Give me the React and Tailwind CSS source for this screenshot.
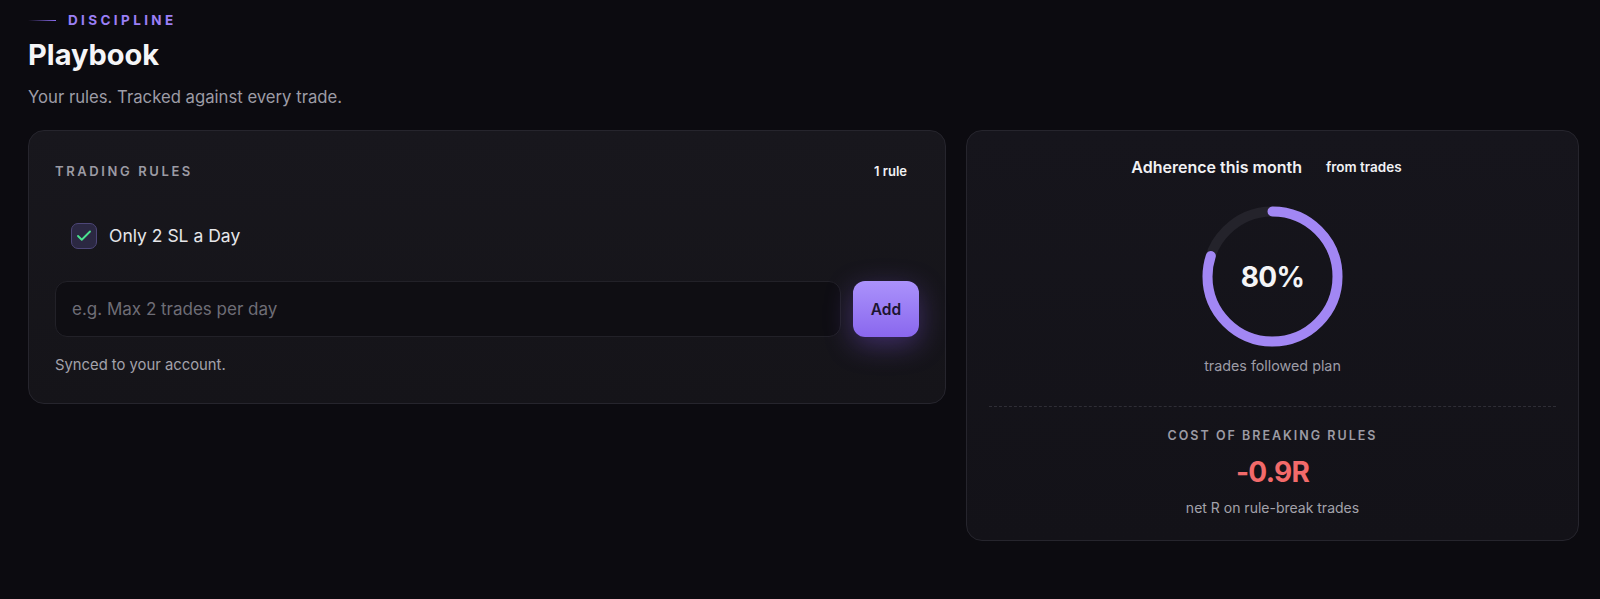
import { Check } from 'lucide-react';

// --- Adherence ring ---
const Ring = ({ value }) => {
  const r = 65;
  const c = 2 * Math.PI * r;
  return (
    <div className="relative w-[141px] h-[141px]">
      <svg width="141" height="141" viewBox="0 0 141 141" className="-rotate-90">
        <circle cx="70.5" cy="70.5" r={r} fill="none" stroke="#24232b" strokeWidth="10" />
        <circle
          cx="70.5" cy="70.5" r={r} fill="none" stroke="#a287f4" strokeWidth="10"
          strokeLinecap="round" strokeDasharray={`${c * value} ${c}`}
        />
      </svg>
      <div className="absolute inset-0 flex items-center justify-center text-[28px] font-bold text-[#f4f4f6] tracking-tight">
        {Math.round(value * 100)}%
      </div>
    </div>
  );
};

export default function App() {
  return (
    <div className="min-h-[599px] bg-[#0c0b10] px-7 pt-[10px] pb-10 font-['Inter','Noto_Sans',sans-serif]">
      {/* --- Header --- */}
      <div className="flex items-center gap-3 h-5">
        <span className="block w-7 h-px bg-gradient-to-r from-transparent to-[#8b6cf0]" />
        <span className="text-[13.5px] font-bold tracking-[0.25em] text-[#9b7ff5]">DISCIPLINE</span>
      </div>
      <h1 className="mt-[7px] text-[29px] leading-9 font-bold text-[#f5f5f7]">Playbook</h1>
      <p className="mt-[12px] text-[16.7px] leading-6 text-[#9d9ca6]">Your rules. Tracked against every trade.</p>

      <div className="mt-[21px] grid grid-cols-[918px_613px] gap-5 items-start">
        {/* --- Trading rules --- */}
        <div className="rounded-2xl border border-[#26252d] bg-gradient-to-b from-[#18171d] to-[#151419] px-[26px] pt-[33px] pb-[28px]">
          <div className="flex items-center justify-between h-4">
            <span className="text-[13px] font-semibold tracking-[0.2em] text-[#9c9ba4]">TRADING RULES</span>
            <span className="px-3 text-[13px] font-semibold text-[#f1f1f4]">1 rule</span>
          </div>

          <div className="mt-[43px] flex items-center gap-3 px-4">
            <span className="flex items-center justify-center w-[26px] h-[26px] rounded-[7px] border border-[#4d4678] bg-[#2b2842]">
              <Check className="w-[18px] h-[18px] text-[#4ae38f]" strokeWidth={2.5} />
            </span>
            <span className="text-[17.5px] text-[#e6e6ea]">Only 2 SL a Day</span>
          </div>

          <div className="mt-[32px] flex gap-3">
            <input
              placeholder="e.g. Max 2 trades per day"
              className="flex-1 h-[56px] rounded-xl border border-[#222128] bg-[#0f0e13] px-4 text-[17px] text-[#e6e6ea] placeholder:text-[#6e6d76] outline-none"
            />
            <button className="w-[66px] h-[56px] rounded-xl bg-gradient-to-b from-[#ab92fb] to-[#8a67ee] text-[15.5px] font-semibold text-[#1c1530] shadow-[0_8px_28px_rgba(139,92,246,0.35)]">
              Add
            </button>
          </div>

          <p className="mt-[18px] text-[14.8px] leading-5 text-[#a3a2ab]">Synced to your account.</p>
        </div>

        {/* --- Adherence --- */}
        <div className="rounded-2xl border border-[#26252d] bg-gradient-to-b from-[#16151c] to-[#131218] px-[22px] pt-[24px] pb-[22px] flex flex-col items-center">
          <div className="flex items-center gap-3 h-6">
            <span className="text-[16px] font-semibold text-[#f1f1f4]">Adherence this month</span>
            <span className="px-3 text-[13.5px] font-semibold text-[#f1f1f4]">from trades</span>
          </div>

          <div className="mt-[27px]">
            <Ring value={0.8} />
          </div>
          <p className="mt-[9px] text-[14.3px] leading-5 text-[#9d9ca6]">trades followed plan</p>

          <div className="mt-[30px] w-full border-t border-dashed border-[#2f2e36]" />

          <p className="mt-[21px] text-[12.5px] leading-4 font-semibold tracking-[0.16em] text-[#9c9ba4]">COST OF BREAKING RULES</p>
          <p className="mt-[12px] text-[28px] leading-8 font-bold text-[#f26a6a] tracking-tight">-0.9R</p>
          <p className="mt-[10px] text-sm leading-5 text-[#a3a2ab]">net R on rule-break trades</p>
        </div>
      </div>
    </div>
  );
}
